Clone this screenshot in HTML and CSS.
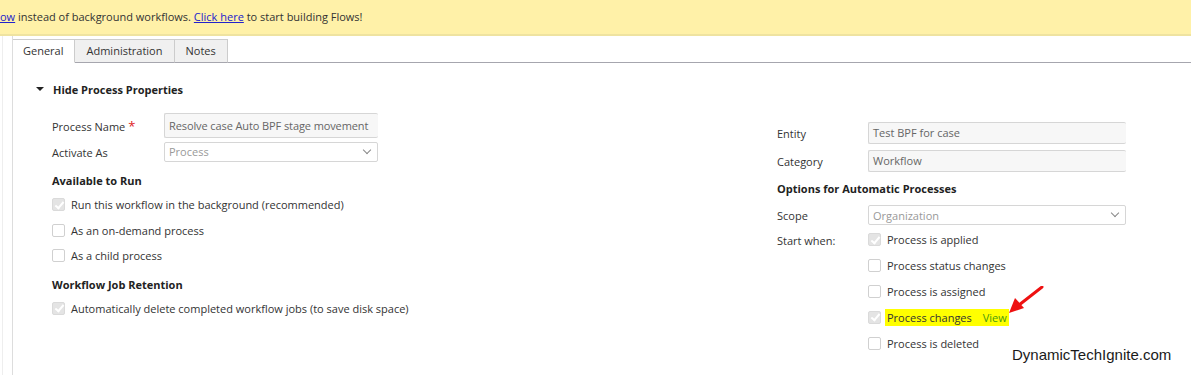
FILE: index.html
```html
<!DOCTYPE html>
<html lang="en">
<head>
<meta charset="UTF-8">
<title>Process Properties</title>
<link rel="stylesheet" href="styles.css">
</head>
<body>
<div class="banner">
    <a href="#">ow</a> instead of background workflows. <a href="#">Click here</a> to start building Flows!
</div>

<div class="shell">
    <div class="content">
        <div class="tabs">
            <div class="tab active">General</div>
            <div class="tab">Administration</div>
            <div class="tab">Notes</div>
            <div class="tab-fill"></div>
        </div>

        <div class="section-toggle"><span class="caret"></span>Hide Process Properties</div>

        <div class="columns">
            <div class="col-left">
                <div class="row row-name">
                    <label class="lbl">Process Name <span class="req">*</span></label>
                    <div class="field field-name">Resolve case Auto BPF stage movement</div>
                </div>
                <div class="row row-select">
                    <label class="lbl">Activate As</label>
                    <div class="field select">Process<span class="chev"></span></div>
                </div>

                <h4 class="group first">Available to Run</h4>
                <div class="check"><span class="cb on"></span>Run this workflow in the background (recommended)</div>
                <div class="check"><span class="cb"></span>As an on-demand process</div>
                <div class="check"><span class="cb"></span>As a child process</div>

                <h4 class="group">Workflow Job Retention</h4>
                <div class="check"><span class="cb on"></span>Automatically delete completed workflow jobs (to save disk space)</div>
            </div>

            <div class="col-right">
                <div class="row row-r">
                    <label class="lbl-r">Entity</label>
                    <div class="field field-r">Test BPF for case</div>
                </div>
                <div class="row row-r">
                    <label class="lbl-r">Category</label>
                    <div class="field field-r">Workflow</div>
                </div>

                <h4 class="group group-r">Options for Automatic Processes</h4>
                <div class="row row-scope">
                    <label class="lbl-r">Scope</label>
                    <div class="field field-r select">Organization<span class="chev"></span></div>
                </div>
                <div class="start">
                    <label class="lbl-r">Start when:</label>
                    <div class="start-list">
                        <div class="check"><span class="cb on"></span>Process is applied</div>
                        <div class="check"><span class="cb"></span>Process status changes</div>
                        <div class="check"><span class="cb"></span>Process is assigned</div>
                        <div class="check"><span class="cb on"></span><span class="hl">Process changes <span class="view">View</span></span></div>
                        <div class="check"><span class="cb"></span>Process is deleted</div>
                    </div>
                </div>
            </div>
        </div>
    </div>
</div>

<svg class="arrow" width="40" height="32" viewBox="0 0 40 32">
    <line x1="35" y1="1" x2="12" y2="19" stroke="#ee1111" stroke-width="3" stroke-linecap="round"/>
    <polygon points="2,27 8,12 17,22" fill="#ee1111"/>
</svg>

<div class="watermark">DynamicTechIgnite.com</div>
</body>
</html>
```

FILE: styles.css
```css
body {
    margin: 0;
    font-family: "Open Sans", "Noto Sans", sans-serif;
    font-size: 11px;
    color: #333333;
    background-color: #ffffff;
    position: relative;
    height: 375px;
    overflow: hidden;
}

.banner {
    height: 34px;
    line-height: 34px;
    background-color: #fff1a8;
    border-bottom: 2px solid #efe3a0;
    color: #333333;
    white-space: nowrap;
}

.banner a {
    color: #2222cc;
}

.shell {
    margin-left: 2px;
    border-left: 1px solid #eeeeee;
    padding-left: 9px;
    height: 340px;
}

.content {
    border-left: 1px solid #dddddd;
    height: 100%;
    padding-top: 3px;
}

.tabs {
    display: flex;
    height: 24px;
}

.tab {
    padding: 0 11px;
    line-height: 22px;
    border: 1px solid #cccccc;
    border-left: none;
    border-bottom: 1px solid #a6a6ae;
    background-color: #f0f0f0;
    color: #333333;
}

.tab.active {
    background-color: #ffffff;
    border-bottom-color: #ffffff;
    padding: 0 11px 0 10px;
}

.tab-fill {
    flex: 1;
    border-bottom: 1px solid #a6a6ae;
}

.section-toggle {
    margin: 18px 0 0 23px;
    font-weight: bold;
    color: #222222;
    display: flex;
    align-items: center;
    height: 16px;
}

.caret {
    width: 0;
    height: 0;
    border-left: 4px solid transparent;
    border-right: 4px solid transparent;
    border-top: 4px solid #222222;
    margin-right: 9px;
}

.columns {
    display: flex;
    padding-left: 39px;
    margin-top: 16px;
}

.col-left {
    width: 725px;
}

.col-right {
    width: 349px;
    padding-top: 9px;
}

.row {
    display: flex;
    align-items: center;
}

.lbl {
    width: 112px;
    color: #333333;
}

.req {
    color: #dd2222;
    font-size: 13px;
}

.field {
    box-sizing: border-box;
    border: 1px solid #d6d6d6;
    border-radius: 2px;
    background-color: #f7f7f7;
    color: #666666;
    padding: 0 4px;
    position: relative;
    white-space: nowrap;
    overflow: hidden;
}

.field-name {
    width: 214px;
    height: 25px;
    line-height: 23px;
    border-right: none;
    padding: 0 2px 0 4px;
    letter-spacing: -0.1px;
}

.row-name {
    height: 25px;
}

.row-select {
    margin-top: 2px;
    height: 24px;
}

.select {
    width: 214px;
    height: 20px;
    line-height: 18px;
    background-color: #ffffff;
    color: #999999;
}

.chev {
    position: absolute;
    right: 7px;
    top: 4px;
    width: 5px;
    height: 5px;
    border-right: 1.5px solid #888888;
    border-bottom: 1.5px solid #888888;
    transform: rotate(45deg);
}

.group {
    margin: 0;
    font-size: 11px;
    font-weight: bold;
    color: #222222;
    height: 16px;
    line-height: 16px;
    margin-top: 8px;
}

.group.first {
    margin-top: 9px;
}

.check {
    display: flex;
    align-items: center;
    height: 26px;
    white-space: nowrap;
}

.col-left .check {
    height: 25.5px;
}

.col-left .group + .check {
    margin-top: 3px;
}

.cb {
    box-sizing: border-box;
    width: 13px;
    height: 13px;
    border: 1px solid #d0d0d0;
    border-radius: 2px;
    background-color: #ffffff;
    margin-right: 6px;
    position: relative;
    flex-shrink: 0;
}

.cb.on {
    background-color: #e4e4e4;
    border-color: #dadada;
}

.cb.on::after {
    content: "";
    position: absolute;
    left: 3.5px;
    top: 0.5px;
    width: 3px;
    height: 7px;
    border-right: 2px solid #ffffff;
    border-bottom: 2px solid #ffffff;
    transform: rotate(40deg);
}

.row-r {
    height: 22px;
    margin-bottom: 6px;
}

.lbl-r {
    width: 91px;
    flex-shrink: 0;
    color: #333333;
}

.field-r {
    width: 258px;
    height: 22px;
    line-height: 20px;
    border-right: none;
}

.group-r {
    margin-top: 9px;
}

.row-scope {
    margin-top: 8px;
    height: 20px;
}

.row-scope .select {
    height: 20px;
    border-right: 1px solid #d6d6d6;
}

.start {
    display: flex;
    margin-top: 2px;
}

.start .lbl-r {
    padding-top: 6px;
}

.start-list .check {
    height: 25.8px;
}

.hl {
    background-color: #ffff00;
    padding: 1px 2px 1px 2px;
    margin-left: -2px;
}

.view {
    color: #4a9a10;
    margin-left: 8px;
}

.arrow {
    position: absolute;
    left: 1007px;
    top: 286px;
}

.watermark {
    position: absolute;
    left: 1012px;
    top: 346px;
    font-family: "Liberation Sans", Arial, sans-serif;
    font-size: 15px;
    color: #1a1a1a;
}
```
